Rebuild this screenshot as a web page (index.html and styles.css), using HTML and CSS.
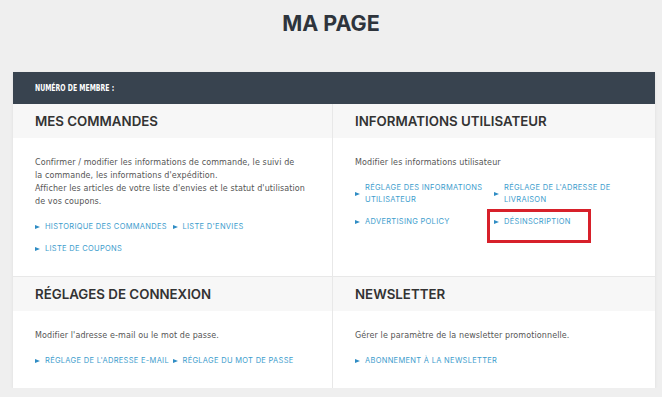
FILE: index.html
```html
<!DOCTYPE html>
<html lang="fr">
<head>
<meta charset="utf-8">
<title>Ma page</title>
<link rel="stylesheet" href="styles.css">
</head>
<body>
<h1 class="page-title">MA PAGE</h1>
<div class="mypage">
  <div class="member-bar"><span class="member-label">NUMÉRO DE MEMBRE :</span></div>
  <div class="cards">
    <section class="card card-left">
      <h2 class="card-head">MES COMMANDES</h2>
      <div class="card-body">
        <p class="desc">Confirmer / modifier les informations de commande, le suivi de la&nbsp;commande, les informations d'expédition.<br>Afficher les articles de votre liste d'envies et le statut d'utilisation de vos coupons.</p>
        <ul class="links">
          <li><span class="tri"></span><a href="#">HISTORIQUE DES COMMANDES</a></li>
          <li><span class="tri"></span><a href="#">LISTE D'ENVIES</a></li>
          <li><span class="tri"></span><a href="#">LISTE DE COUPONS</a></li>
        </ul>
      </div>
    </section>
    <section class="card">
      <h2 class="card-head">INFORMATIONS UTILISATEUR</h2>
      <div class="card-body">
        <p class="desc">Modifier les informations utilisateur</p>
        <ul class="links">
          <li><span class="tri"></span><a href="#">RÉGLAGE DES INFORMATIONS UTILISATEUR</a></li>
          <li><span class="tri"></span><a href="#">RÉGLAGE DE L'ADRESSE DE LIVRAISON</a></li>
          <li><span class="tri"></span><a href="#">ADVERTISING POLICY</a></li>
          <li class="marked"><span class="tri"></span><a href="#">DÉSINSCRIPTION</a></li>
        </ul>
      </div>
    </section>
    <section class="card card-left card-row2">
      <h2 class="card-head">RÉGLAGES DE CONNEXION</h2>
      <div class="card-body">
        <p class="desc">Modifier l'adresse e-mail ou le mot de passe.</p>
        <ul class="links">
          <li><span class="tri"></span><a href="#">RÉGLAGE DE L'ADRESSE E-MAIL</a></li>
          <li><span class="tri"></span><a href="#">RÉGLAGE DU MOT DE PASSE</a></li>
        </ul>
      </div>
    </section>
    <section class="card card-row2">
      <h2 class="card-head">NEWSLETTER</h2>
      <div class="card-body">
        <p class="desc">Gérer le paramètre de la newsletter promotionnelle.</p>
        <ul class="links">
          <li class="wide"><span class="tri"></span><a href="#">ABONNEMENT À LA NEWSLETTER</a></li>
        </ul>
      </div>
    </section>
  </div>
</div>
</body>
</html>
```

FILE: styles.css
```css
* { box-sizing: border-box; }

body {
  margin: 0;
  background: #efefef;
  font-family: "DejaVu Sans", "Noto Sans", sans-serif;
  color: #555;
}

.page-title {
  margin: 0;
  padding-top: 10px;
  height: 72px;
  font-family: Inter, "Noto Sans", sans-serif;
  font-weight: 700;
  font-size: 21.5px;
  line-height: 26px;
  text-align: center;
  color: #2e343c;
}

.mypage {
  margin: 0 7px 0 13px;
  background: #fff;
  box-shadow: 0 1px 3px rgba(0, 0, 0, 0.08);
}

.member-bar {
  height: 32px;
  padding-left: 22px;
  background: #38434f;
  color: #fff;
  font-family: "DejaVu Sans Condensed", sans-serif;
  font-weight: 700;
  font-size: 8.2px;
  line-height: 32px;
}

.member-label {
  display: inline-block;
  transform: scaleX(0.84);
  transform-origin: left center;
}

.cards {
  display: grid;
  grid-template-columns: 320px 1fr;
}

.card {
  display: flex;
  flex-direction: column;
}

.card-left { border-right: 1px solid #e8e8e8; }
.card-row2 { border-top: 1px solid #e8e8e8; }

.card-head {
  margin: 0;
  height: 34px;
  padding-left: 22px;
  background: #f7f7f7;
  font-family: Inter, "Noto Sans", sans-serif;
  font-weight: 600;
  font-size: 13.3px;
  line-height: 35px;
  color: #333;
}

.card-body {
  flex: 1;
  padding: 18px 18px 21px 22px;
}

.desc {
  margin: 0;
  font-size: 8px;
  line-height: 13px;
  letter-spacing: 0.1px;
  color: #555;
}

.links {
  list-style: none;
  margin: 13px 4px 0 0;
  padding: 0;
  display: grid;
  grid-template-columns: 1fr 1fr;
  row-gap: 10px;
}

.links li {
  display: flex;
  align-items: center;
  gap: 5px;
  font-family: Inter, "Noto Sans", sans-serif;
  font-size: 7.5px;
  line-height: 12px;
  letter-spacing: 0.3px;
}

.links li.wide { grid-column: span 2; }

.links a {
  color: #3d9dcd;
  text-decoration: none;
}

.tri {
  flex: none;
  width: 0;
  height: 0;
  border-top: 2.5px solid transparent;
  border-bottom: 2.5px solid transparent;
  border-left: 5px solid #2f8cc4;
}

.marked { position: relative; }

.marked::after {
  content: "";
  position: absolute;
  left: -7px;
  top: -7px;
  width: 98px;
  height: 28px;
  border: 3px solid #d7202a;
}
```
